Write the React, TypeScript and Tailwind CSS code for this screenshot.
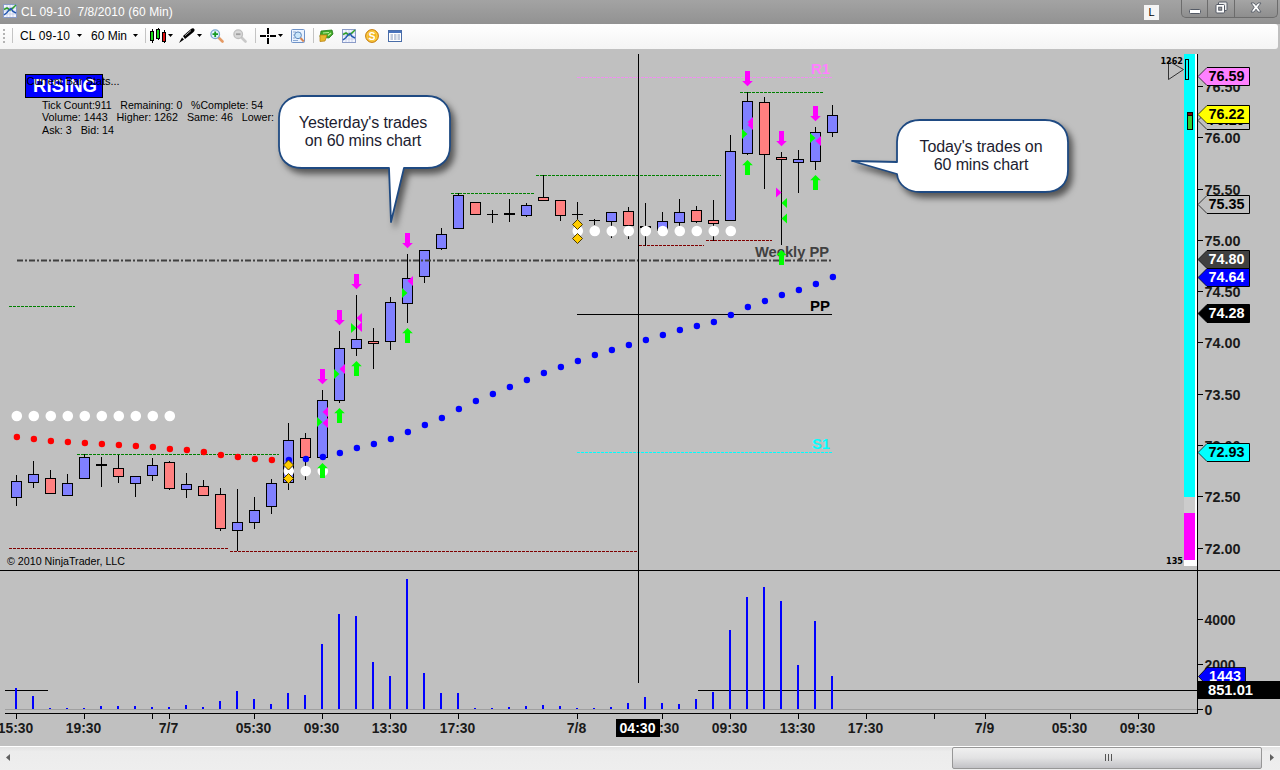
import React from "react";

type Candle = [high: number, top: number, bottom: number, low: number, kind: "up" | "down" | "doji"];

const STEP = 17;
const barX = (i: number) => 16 + i * STEP;

const CANDLES: Candle[] = [
  [475, 481, 498, 506, "up"],
  [461, 474, 483, 488, "up"],
  [470, 478, 494, 494, "down"],
  [474, 483, 496, 496, "up"],
  [454, 457, 479, 479, "up"],
  [457, 464, 466, 487, "doji"],
  [455, 468, 477, 483, "down"],
  [476, 476, 484, 497, "up"],
  [458, 465, 476, 481, "up"],
  [461, 462, 489, 490, "down"],
  [473, 484, 490, 498, "up"],
  [480, 486, 496, 496, "down"],
  [488, 494, 529, 531, "down"],
  [489, 522, 531, 551, "up"],
  [497, 510, 523, 529, "up"],
  [479, 483, 507, 514, "up"],
  [423, 440, 483, 490, "up"],
  [433, 438, 458, 480, "down"],
  [390, 400, 458, 458, "up"],
  [331, 348, 401, 403, "up"],
  [295, 339, 349, 356, "up"],
  [328, 341, 344, 369, "down"],
  [297, 302, 342, 350, "up"],
  [254, 278, 304, 323, "up"],
  [250, 250, 277, 283, "up"],
  [228, 234, 249, 250, "up"],
  [193, 195, 229, 229, "up"],
  [202, 202, 215, 215, "down"],
  [210, 214, 215, 223, "doji"],
  [199, 213, 215, 222, "doji"],
  [203, 205, 216, 217, "up"],
  [175, 197, 201, 201, "down"],
  [200, 200, 216, 221, "down"],
  [202, 214, 215, 236, "doji"],
  [219, 220, 221, 225, "doji"],
  [212, 212, 222, 238, "up"],
  [207, 211, 226, 239, "down"],
  [203, 226, 228, 246, "doji"],
  [212, 221, 231, 234, "up"],
  [199, 212, 223, 227, "up"],
  [206, 210, 222, 223, "down"],
  [200, 220, 224, 241, "down"],
  [135, 151, 221, 221, "up"],
  [92, 101, 154, 155, "up"],
  [97, 102, 155, 189, "down"],
  [152, 157, 160, 245, "down"],
  [150, 159, 163, 193, "up"],
  [127, 132, 162, 170, "up"],
  [105, 115, 133, 137, "up"],
];

// moving average, red while falling and blue once it turns
const AVERAGE = [
  437, 439, 441, 442, 443, 444, 445, 446, 447, 449, 450, 452, 455, 457, 459, 460, 460, 459, 457, 453, 448, 444, 439, 432,
  425, 418, 409, 401, 394, 387, 380, 373, 367, 361, 355, 350, 345, 340, 335, 330, 326, 322, 315, 307, 301, 295, 290, 284, 277,
];
const TURN = 16;

const VOLUME_TOPS = [
  688, 696, 708, 708, 708, 706, 706, 706, 707, 707, 705, 707, 701, 691, 699, 704, 693, 695, 644, 614, 616, 662, 676, 579,
  673, 693, 693, 708, 708, 707, 706, 705, 706, 708, 708, 707, 703, 697, 703, 704, 699, 692, 630, 597, 587, 601, 665, 621, 676,
];

const WHITE_DOTS = [
  { from: 0, to: 9, y: 416 },
  { from: 16, to: 18, y: 471 },
  { from: 33, to: 42, y: 231 },
];

const SWINGS = [
  { x1: 9, x2: 75, y: 306, color: "#008000" },
  { x1: 77, x2: 279, y: 454, color: "#008000" },
  { x1: 451, x2: 534, y: 193, color: "#008000" },
  { x1: 536, x2: 721, y: 175, color: "#008000" },
  { x1: 740, x2: 823, y: 92, color: "#008000" },
  { x1: 9, x2: 228, y: 548, color: "#800000" },
  { x1: 230, x2: 637, y: 551, color: "#800000" },
  { x1: 639, x2: 704, y: 245, color: "#800000" },
  { x1: 706, x2: 772, y: 240, color: "#800000" },
];

const SELLS = [[18, 369], [19, 310], [20, 274], [23, 233], [43, 71], [45, 131], [47, 106]];
const BUYS = [[18, 463], [19, 408], [20, 361], [23, 328], [43, 160], [45, 250], [47, 175]];
const DIAMONDS = [[16, 465], [16, 478.5], [33, 224.5], [33, 238.5]];

type Fill = { bar: number; y: number; point: "left" | "right"; color: string };

const LIME = "#00ff00";
const MAGENTA = "#ff00ff";

const FILLS: Fill[] = [
  { bar: 18, y: 422, point: "right", color: LIME },
  { bar: 18, y: 412, point: "left", color: MAGENTA },
  { bar: 18, y: 423, point: "left", color: MAGENTA },
  { bar: 19, y: 374, point: "right", color: LIME },
  { bar: 19, y: 369, point: "left", color: MAGENTA },
  { bar: 20, y: 328, point: "right", color: LIME },
  { bar: 20, y: 318, point: "left", color: MAGENTA },
  { bar: 20, y: 327, point: "left", color: MAGENTA },
  { bar: 23, y: 293, point: "right", color: LIME },
  { bar: 23, y: 281, point: "left", color: MAGENTA },
  { bar: 43, y: 134, point: "right", color: LIME },
  { bar: 43, y: 122, point: "left", color: MAGENTA },
  { bar: 43, y: 125, point: "left", color: MAGENTA },
  { bar: 45, y: 192.5, point: "right", color: MAGENTA },
  { bar: 45, y: 203, point: "left", color: LIME },
  { bar: 45, y: 218.5, point: "left", color: LIME },
  { bar: 47, y: 138, point: "right", color: LIME },
  { bar: 47, y: 141, point: "left", color: MAGENTA },
];

const PRICE_TICKS = [
  { label: "76.50", y: 86 },
  { label: "76.00", y: 137 },
  { label: "75.50", y: 189 },
  { label: "75.00", y: 240 },
  { label: "74.50", y: 291 },
  { label: "74.00", y: 342 },
  { label: "73.50", y: 394 },
  { label: "73.00", y: 445 },
  { label: "72.50", y: 496 },
  { label: "72.00", y: 548 },
];

const PRICE_TAGS = [
  { label: "76.10", y: 111, bg: "#c0c0c0", fg: "#000" },
  { label: "76.59", y: 67, bg: "#ff80ff", fg: "#000" },
  { label: "76.22", y: 105, bg: "#ffff00", fg: "#000" },
  { label: "75.35", y: 195, bg: "#c0c0c0", fg: "#000" },
  { label: "74.80", y: 250, bg: "#404040", fg: "#fff" },
  { label: "74.64", y: 268, bg: "#0000ff", fg: "#fff" },
  { label: "74.28", y: 304, bg: "#000", fg: "#fff" },
  { label: "72.93", y: 443, bg: "#00ffff", fg: "#000" },
];

const TIME_TICKS = [
  { x: 16, label: "15:30" },
  { x: 84, label: "19:30" },
  { x: 152 },
  { x: 169, label: "7/7" },
  { x: 254, label: "05:30" },
  { x: 322, label: "09:30" },
  { x: 390, label: "13:30" },
  { x: 458, label: "17:30" },
  { x: 577, label: "7/8" },
  { x: 662, label: "05:30" },
  { x: 730, label: "09:30" },
  { x: 798, label: "13:30" },
  { x: 866, label: "17:30" },
  { x: 934 },
  { x: 985, label: "7/9" },
  { x: 1070, label: "05:30" },
  { x: 1138, label: "09:30" },
];

const STATS = [
  { y: 109, width: 221, text: "Tick Count:911\u00a0\u00a0\u00a0Remaining: 0\u00a0\u00a0\u00a0%Complete: 54" },
  { y: 121, width: 232, text: "Volume: 1443\u00a0\u00a0\u00a0Higher: 1262\u00a0\u00a0\u00a0Same: 46\u00a0\u00a0\u00a0Lower:" },
  { y: 134, width: 72, text: "Ask: 3\u00a0\u00a0\u00a0Bid: 14" },
];

const CANDLE_FILL = { up: "#8080ff", down: "#ff8080", doji: "#000" };

function CandleBar({ i, candle }: { i: number; candle: Candle }) {
  const [high, top, bottom, low, kind] = candle;
  const x = barX(i);
  return (
    <g shapeRendering="crispEdges">
      <rect x={x} y={high} width="1" height={low - high} fill="#000" />
      <rect x={x - 5} y={top} width="11" height={bottom - top} fill="#000" />
      {kind !== "doji" && (
        <rect x={x - 4} y={top + 1} width="9" height={bottom - top - 2} fill={CANDLE_FILL[kind]} />
      )}
    </g>
  );
}

function PricePane() {
  return (
    <svg viewBox="0 49 1197 521" className="block h-[521px] w-[1197px]">
      {SWINGS.map((s) => (
        <path
          key={`${s.x1}-${s.y}`}
          d={`M${s.x1} ${s.y + 0.5}H${s.x2}`}
          stroke={s.color}
          strokeDasharray="3 1"
          shapeRendering="crispEdges"
        />
      ))}
      <path d="M577 77.5H832" stroke="#ff80ff" strokeDasharray="3 1" opacity="0.75" />

      {CANDLES.map((candle, i) => (
        <CandleBar key={i} i={i} candle={candle} />
      ))}

      <path d="M17 260.5H832" stroke="#404040" strokeWidth="2" strokeDasharray="6 2 2 2" />
      <path d="M577 314.5H832" stroke="#000" shapeRendering="crispEdges" />
      <path d="M577 452.5H832" stroke="#00ffff" strokeDasharray="3 1" shapeRendering="crispEdges" />
      <g className="text-[14px] font-bold">
        <text x="811" y="74" textLength="19" lengthAdjust="spacingAndGlyphs" fill="#ff80ff">R1</text>
        <text x="755" y="257" textLength="74" lengthAdjust="spacingAndGlyphs" fill="#404040">Weekly PP</text>
        <text x="810" y="311" textLength="20" lengthAdjust="spacingAndGlyphs" fill="#000">PP</text>
        <text x="812" y="449" textLength="18" lengthAdjust="spacingAndGlyphs" fill="#00ffff">S1</text>
      </g>

      {WHITE_DOTS.flatMap(({ from, to, y }) =>
        Array.from({ length: to - from + 1 }, (_, n) => (
          <circle key={`${y}-${n}`} cx={barX(from + n) + 0.8} cy={y} r="5.3" fill="#fff" />
        ))
      )}
      {AVERAGE.map((y, i) => (
        <circle key={i} cx={barX(i) + 0.9} cy={y} r="3.2" fill={i < TURN ? "#ff0000" : "#0000ff"} />
      ))}

      {FILLS.map(({ bar, y, point, color }, n) => {
        const x = barX(bar) + 0.5;
        const base = point === "left" ? x + 5.5 : x - 5.5;
        return <path key={n} d={`M${x} ${y}L${base} ${y - 5}V${y + 5}Z`} fill={color} />;
      })}
      {SELLS.map(([bar, y]) => (
        <path
          key={bar}
          transform={`translate(${barX(bar) + 0.5} ${y})`}
          d="M-2.5 0H2.5V10H5.3L0 15.3L-5.3 10H-2.5Z"
          fill={MAGENTA}
        />
      ))}
      {BUYS.map(([bar, y]) => (
        <path
          key={bar}
          transform={`translate(${barX(bar) + 0.5} ${y})`}
          d="M-2.5 15H2.5V5.3H5.3L0 0L-5.3 5.3H-2.5Z"
          fill={LIME}
        />
      ))}
      {DIAMONDS.map(([bar, y]) => (
        <path
          key={y}
          transform={`translate(${barX(bar) + 0.5} ${y})`}
          d="M0 -5L5 0L0 5L-5 0Z"
          fill="#ffcc00"
          stroke="#4a3a00"
        />
      ))}

      {/* trend badge and bar statistics */}
      <rect x="25.5" y="74.5" width="77" height="23" fill="#0000ff" stroke="#000" />
      <text x="33" y="92" textLength="64" lengthAdjust="spacingAndGlyphs" fill="#fff" className="text-[18px] font-bold">
        RISING
      </text>
      <text x="26.5" y="85" textLength="93" className="text-[11px]">Current Bar Stats...</text>
      {STATS.map((s) => (
        <text key={s.y} x="42" y={s.y} textLength={s.width} lengthAdjust="spacingAndGlyphs" className="text-[10.5px]">
          {s.text}
        </text>
      ))}
      <text x="7" y="565" textLength="118" lengthAdjust="spacingAndGlyphs" className="text-[11px]">
        © 2010 NinjaTrader, LLC
      </text>

      {/* tick strength gauge */}
      <g shapeRendering="crispEdges">
        <rect x="1184" y="54" width="11" height="443" fill="#00ffff" />
        <rect x="1184" y="497" width="11" height="16" fill="#cccccc" />
        <rect x="1184" y="513" width="11" height="47" fill="#ff00ff" />
        <rect x="1195" y="54" width="2" height="512" fill="#fff" />
        <rect x="1184" y="560" width="13" height="6" fill="#fff" />
        <rect x="1185.5" y="59.5" width="3" height="20" fill="none" stroke="#000" />
        <rect x="1187" y="112" width="6" height="18" fill="#000" />
        <rect x="1188" y="113" width="4" height="2" fill="#800000" />
        <rect x="1188" y="116" width="4" height="13" fill="#32cd32" />
      </g>
      <path d="M1168.5 61V79.5L1183.5 69.5Z" fill="none" stroke="#222" strokeWidth="0.9" />
      <g className="font-['DejaVu_Sans'] text-[9px] font-bold">
        <text x="1160.5" y="64" textLength="22.5" lengthAdjust="spacingAndGlyphs">1262</text>
        <text x="1166" y="564" textLength="17" lengthAdjust="spacingAndGlyphs">135</text>
      </g>

      <rect x="638" y="54" width="1" height="516" fill="#000" shapeRendering="crispEdges" />
    </svg>
  );
}

function VolumePane() {
  return (
    <svg viewBox="0 571 1197 142" className="block h-[142px] w-[1197px]" shapeRendering="crispEdges">
      <rect x="5" y="709" width="1192" height="1" fill="#a0a0a0" />
      <rect x="5" y="690" width="43" height="1" fill="#000" />
      <rect x="698" y="690" width="499" height="1" fill="#000" />
      {VOLUME_TOPS.map((top, i) => (
        <rect key={i} x={barX(i) - 1} y={top} width="2" height={709 - top} fill="#0000ff" />
      ))}
      <rect x="638" y="571" width="1" height="112" fill="#000" />
    </svg>
  );
}

function TimeAxis() {
  return (
    <svg viewBox="0 713 1198 33" className="block h-[33px] w-[1198px] text-[14px] font-bold">
      <rect x="5" y="713" width="1193" height="1" fill="#000" />
      {TIME_TICKS.map(({ x, label }) => (
        <g key={x} fill="#1a1a1a">
          <rect x={x} y="714" width="1" height="5" fill="#000" />
          {label && (
            <text
              x={x - 0.5}
              y="733"
              textAnchor="middle"
              textLength={label.length === 5 ? 35.5 : 19.5}
              lengthAdjust="spacingAndGlyphs"
            >
              {label}
            </text>
          )}
        </g>
      ))}
      <rect x="616" y="719" width="44" height="18" fill="#000" />
      <text x="619.5" y="733" textLength="36" lengthAdjust="spacingAndGlyphs" fill="#fff">04:30</text>
    </svg>
  );
}

function PriceAxis() {
  return (
    <svg viewBox="1197 49 83 521" className="block h-[521px] w-[83px] text-[14px] font-bold">
      <rect x="1197" y="54" width="1" height="516" fill="#000" />
      {PRICE_TICKS.map(({ label, y }) => (
        <g key={label} fill="#1a1a1a">
          <rect x="1198" y={y} width="5" height="1" fill="#000" />
          <text x="1204.5" y={y + 5.5} textLength="36" lengthAdjust="spacingAndGlyphs">{label}</text>
        </g>
      ))}
      {PRICE_TAGS.map(({ label, y, bg, fg }) => (
        <g key={label}>
          <path d={`M1198 ${y + 9.5}L1207 ${y + 0.5}H1249.5V${y + 18.5}H1207Z`} fill={bg} />
          <path d={`M1207 ${y + 0.5}H1249.5V${y + 18.5}H1207`} fill="none" stroke="#000" />
          <path d={`M1207 ${y + 0.5}L1198 ${y + 9.5}L1207 ${y + 18.5}`} fill="none" stroke="#000" strokeWidth="0.7" />
          <text x="1208.5" y={y + 14} textLength="36" lengthAdjust="spacingAndGlyphs" fill={fg}>{label}</text>
        </g>
      ))}
    </svg>
  );
}

function VolumeAxis() {
  return (
    <svg viewBox="1197 571 83 142" className="block h-[142px] w-[83px] overflow-visible text-[14px] font-bold">
      <rect x="1197" y="571" width="1" height="142" fill="#000" />
      {[["4000", 619], ["2000", 664], ["0", 709]].map(([label, y]) => (
        <g key={label} fill="#1a1a1a">
          <rect x="1198" y={y} width="5" height="1" fill="#000" />
          <text x="1204.5" y={Number(y) + 5.5}>{label}</text>
        </g>
      ))}
      <path d="M1198.5 676.5L1207 667.5H1245.5V685.5H1207Z" fill="#0000ff" stroke="#000" strokeWidth="0.8" />
      <text x="1209" y="681" textLength="32" lengthAdjust="spacingAndGlyphs" fill="#fff">1443</text>
      <rect x="1197" y="681" width="83" height="18" fill="#000" />
      <text x="1208" y="695" textLength="45" lengthAdjust="spacingAndGlyphs" fill="#fff">851.01</text>
    </svg>
  );
}

type CalloutProps = { outline: string; className: string; lines: string[] };

function Callout({ outline, className, lines }: CalloutProps) {
  return (
    <div className={`absolute ${className}`}>
      <svg className="absolute inset-0 h-full w-full overflow-visible drop-shadow-[4px_5px_3px_rgba(0,0,0,0.55)]">
        <path d={outline} fill="#fff" stroke="#1f4a82" strokeWidth="1.8" strokeLinejoin="round" />
      </svg>
      <div className="relative flex h-[74px] w-[172px] flex-col items-center justify-center pr-[2px] text-[16px] leading-[18px] tracking-[-0.12px] text-[#1c1c30]">
        {lines.map((line) => (
          <span key={line} className="whitespace-nowrap">{line}</span>
        ))}
      </div>
    </div>
  );
}

function MiniChart({ className }: { className: string }) {
  return (
    <svg viewBox="0 0 14 14" className={className}>
      <rect x="0.5" y="0.5" width="13" height="13" fill="#f4f7ff" stroke="#8b9cc8" />
      <path d="M4 1V13M7 1V13M10 1V13M1 4H13M1 7H13M1 10H13" stroke="#b9c3e2" strokeWidth="0.7" />
      <path d="M1 5.5L4 4L7 6L10 4L13 1" fill="none" stroke="#2f9e2a" strokeWidth="1.6" />
      <path d="M1 11L4 8.5L6 6L8 4.5L10 7.5L13 9" fill="none" stroke="#2459b0" strokeWidth="1.5" />
    </svg>
  );
}

function TitleBar() {
  return (
    <header className="flex h-6 shrink-0 items-center bg-linear-to-b from-[#a3a3a3] to-[#929292] pl-[3px]">
      <MiniChart className="mb-[2px] h-[14px] w-[14px]" />
      <h1 className="ml-[4px] text-[12px] tracking-[0.08px] whitespace-pre text-white">{"CL 09-10  7/8/2010 (60 Min)"}</h1>
      <span className="ml-auto flex h-[15px] w-[15px] items-center justify-center bg-[#f4f4f4] text-[11px] text-black">L</span>
      <div className="mr-[2px] ml-[22px] flex h-[18px] w-[97px] self-start rounded-b-[5px] border border-t-0 border-[#6c6c6c] bg-linear-to-b from-[#a5a5a5] to-[#8e8e8e]">
        <div className="flex w-[26px] items-center justify-center border-r border-[#6c6c6c]">
          <svg viewBox="0 0 12 14" className="h-[14px] w-3">
            <rect x="0.5" y="7.5" width="11" height="4" rx="1" fill="#fff" stroke="#555b66" />
          </svg>
        </div>
        <div className="flex w-[27px] items-center justify-center border-r border-[#6c6c6c]">
          <svg viewBox="0 0 13 13" className="mt-[-2px] h-[13px] w-[13px]" stroke="#555b66">
            <rect x="3.5" y="1" width="8.5" height="8.5" rx="1" fill="#eee" />
            <rect x="1" y="3.5" width="8.5" height="8.5" rx="1" fill="#fff" />
            <rect x="3.7" y="6.2" width="3" height="3" fill="#999" />
          </svg>
        </div>
        <div className="flex flex-1 items-center justify-center">
          <svg viewBox="0 0 12 11" className="mt-[-2px] h-[11px] w-3">
            <path
              d="M1 1H4L6 3.4L8 1H11L7.8 5.2L11 10H8L6 7.2L4 10H1L4.2 5.2Z"
              fill="#fff"
              stroke="#555b66"
              strokeWidth="0.9"
            />
          </svg>
        </div>
      </div>
    </header>
  );
}

function Caret({ className = "" }: { className?: string }) {
  return (
    <svg viewBox="0 0 5 3" className={`h-[3px] w-[5px] shrink-0 ${className}`}>
      <path d="M0 0H5L2.5 3Z" fill="#000" />
    </svg>
  );
}

function Separator({ className }: { className: string }) {
  return <div className={`h-[15px] w-px shrink-0 bg-[#c4c4c4] ${className}`} />;
}

function Magnifier({ className, plus = false }: { className: string; plus?: boolean }) {
  return (
    <svg viewBox="0 0 14 14" className={`h-[14px] w-[14px] shrink-0 ${className}`}>
      <path d="M8.5 8.5L12.5 12.5" stroke={plus ? "#e59a64" : "#c9c9c9"} strokeWidth="2.6" strokeLinecap="round" />
      <circle cx="5.2" cy="5.2" r="4.3" fill={plus ? "#e4f4ff" : "#d9d9d9"} stroke={plus ? "#7ba7cf" : "#bfbfbf"} strokeWidth="1.3" />
      <path d={plus ? "M2.5 5.2H8M5.2 2.5V8" : "M3 5.2H7.5"} stroke={plus ? "#159a24" : "#a0a0a0"} strokeWidth="1.8" />
    </svg>
  );
}

function Toolbar() {
  return (
    <div className="mr-[2px] flex h-[25px] shrink-0 items-center rounded-r-[3px] bg-linear-to-b from-white to-[#f4f4f4] pb-[2px] pl-[3px] text-[12px] text-black">
      <svg viewBox="0 0 2 14" className="h-[14px] w-[2px]">
        <path d="M1 0V14" stroke="#b4b4b4" strokeWidth="2" strokeDasharray="2 2" />
      </svg>
      <Separator className="ml-[7px]" />
      <span className="ml-[7px] w-[51px] tracking-[0.16px] whitespace-nowrap">CL 09-10</span>
      <Caret className="ml-[6px]" />
      <span className="ml-[9px] w-[36px] whitespace-nowrap">60 Min</span>
      <Caret className="ml-[6px]" />
      <Separator className="ml-[7px]" />

      <svg viewBox="0 0 17 15" className="ml-[4px] h-[15px] w-[17px] shrink-0" shapeRendering="crispEdges">
        <path d="M2 1V15M8 0V12M14 2V15" stroke="#000" />
        <rect x="0.5" y="3.5" width="3" height="9" fill="#19e019" stroke="#000" />
        <rect x="6.5" y="1.5" width="3" height="9" fill="#19e019" stroke="#000" />
        <rect x="12.5" y="4.5" width="3" height="9" fill="#e01010" stroke="#000" />
      </svg>
      <Caret className="ml-[1px]" />
      <svg viewBox="0 0 16 15" className="ml-[6px] h-[15px] w-4 shrink-0">
        <path d="M0 15L3 9.5L5 11.5Z" fill="#000" />
        <path d="M4 8L12 1Q14.5 -0.5 15.5 1.5Q16 3 14 4.5L6 11Z" fill="#000" />
        <path d="M6 7.7L12 2.5" stroke="#bbb" strokeWidth="0.9" />
      </svg>
      <Caret className="ml-[2px]" />
      <Magnifier className="ml-[8px]" plus />
      <Magnifier className="ml-[9px]" />
      <Separator className="ml-[8px]" />

      <svg viewBox="0 0 16 16" className="ml-[4px] h-4 w-4 shrink-0" shapeRendering="crispEdges">
        <path d="M0 8H6M10 8H16M8 0V6M8 10V16" stroke="#000" strokeWidth="2" />
        <rect x="7" y="7" width="2" height="2" fill="#000" />
      </svg>
      <Caret className="ml-[2px]" />
      <svg viewBox="0 0 14 14" className="ml-[8px] h-[14px] w-[14px] shrink-0">
        <rect x="0.5" y="0.5" width="13" height="13" rx="1" fill="#eaf3ff" stroke="#6f93c8" />
        <path d="M2 3H5M2 6H4M2 9H4M2 11.5H7" stroke="#8ba9d3" />
        <circle cx="7" cy="6.3" r="3.4" fill="#c9e6fb" stroke="#5c88bd" />
        <path d="M9.5 9L12.8 12.5" stroke="#d7844e" strokeWidth="1.9" />
      </svg>
      <Separator className="ml-[8px]" />

      <svg viewBox="0 0 15 14" className="ml-[5px] h-[14px] w-[15px] shrink-0">
        <path d="M2 2L13 1L14 5L10 9L1 8Z" fill="#3faa28" stroke="#267819" strokeWidth="0.8" />
        <path d="M1 6H8L6 12L1 12.5Z" fill="#e9b92c" stroke="#b98316" strokeWidth="0.8" />
        <path d="M4 4L10 3.5M9 6.5L12 4" stroke="#c2f09a" strokeWidth="1.2" />
      </svg>
      <MiniChart className="ml-[8px] h-[14px] w-[14px] shrink-0" />
      <svg viewBox="0 0 14 14" className="ml-[9px] h-[14px] w-[14px] shrink-0">
        <circle cx="7" cy="7" r="6.4" fill="#f3b61f" stroke="#c47c12" />
        <circle cx="7" cy="7" r="5" fill="none" stroke="#ffd964" strokeWidth="0.8" />
        <text x="7" y="10.8" textAnchor="middle" fill="#fff" className="text-[10.5px] font-bold">S</text>
      </svg>
      <svg viewBox="0 0 14 12" className="ml-[9px] h-3 w-[14px] shrink-0">
        <rect x="0.5" y="0.5" width="13" height="11" fill="#fff" stroke="#4a6da8" />
        <rect x="1" y="1" width="12" height="2" fill="#4772bd" />
        <path d="M2.5 5H5M6 5H8.5M9.5 5H12M2.5 7H5M6 7H8.5M9.5 7H12M2.5 9H5M6 9H8.5M9.5 9H12" stroke="#8296bb" />
      </svg>
    </div>
  );
}

function ScrollBar() {
  return (
    <footer className="flex h-6 shrink-0 items-center border-t border-white bg-linear-to-b from-[#e2e2e2] via-[#ececec] via-20% to-[#eeeeee]">
      <svg viewBox="0 0 4 7" className="mb-[2px] ml-[6px] h-[7px] w-1">
        <path d="M4 0V7L0 3.5Z" fill="#606060" />
      </svg>
      <div className="ml-auto flex h-[22px] w-[310px] items-center justify-center gap-[2px] self-start rounded-[2px] border border-[#979797] bg-linear-to-b from-[#f0f0f0] via-[#e2e2e3] via-50% to-[#c2c2c6] pb-[2px] pl-[2px]">
        <i className="h-[7px] w-px bg-[#555]" />
        <i className="h-[7px] w-px bg-[#555]" />
        <i className="h-[7px] w-px bg-[#555]" />
      </div>
      <svg viewBox="0 0 4 7" className="mr-[6px] mb-[2px] ml-[8px] h-[7px] w-1">
        <path d="M0 0V7L4 3.5Z" fill="#606060" />
      </svg>
    </footer>
  );
}

export default function App() {
  return (
    <div className="flex h-[770px] w-[1280px] flex-col overflow-hidden bg-[#c0c0c0] font-['Liberation_Sans',Arial,sans-serif]">
      <TitleBar />
      <Toolbar />

      <main className="relative flex flex-1 flex-col">
        <div className="flex border-b border-black">
          <PricePane />
          <PriceAxis />
        </div>
        <div className="flex">
          <VolumePane />
          <VolumeAxis />
        </div>
        <TimeAxis />

        <Callout
          className="top-[46px] left-[278px] h-[128px] w-[173px]"
          outline="M24 1H149C163 1 172 10 172 23V51C172 65 163 73 149 73H126L113 127L111 73H24C10 73 1 65 1 51V23C1 10 10 1 24 1Z"
          lines={["Yesterday's trades", "on 60 mins chart"]}
        />
        <Callout
          className="top-[70px] left-[896px] h-[74px] w-[173px]"
          outline="M24 1H149C163 1 172 10 172 23V51C172 65 163 73 149 73H24C12 73 2 66 1 55L-44 42L1 43V23C1 10 10 1 24 1Z"
          lines={["Today's trades on", "60 mins chart"]}
        />
      </main>

      <ScrollBar />
    </div>
  );
}
